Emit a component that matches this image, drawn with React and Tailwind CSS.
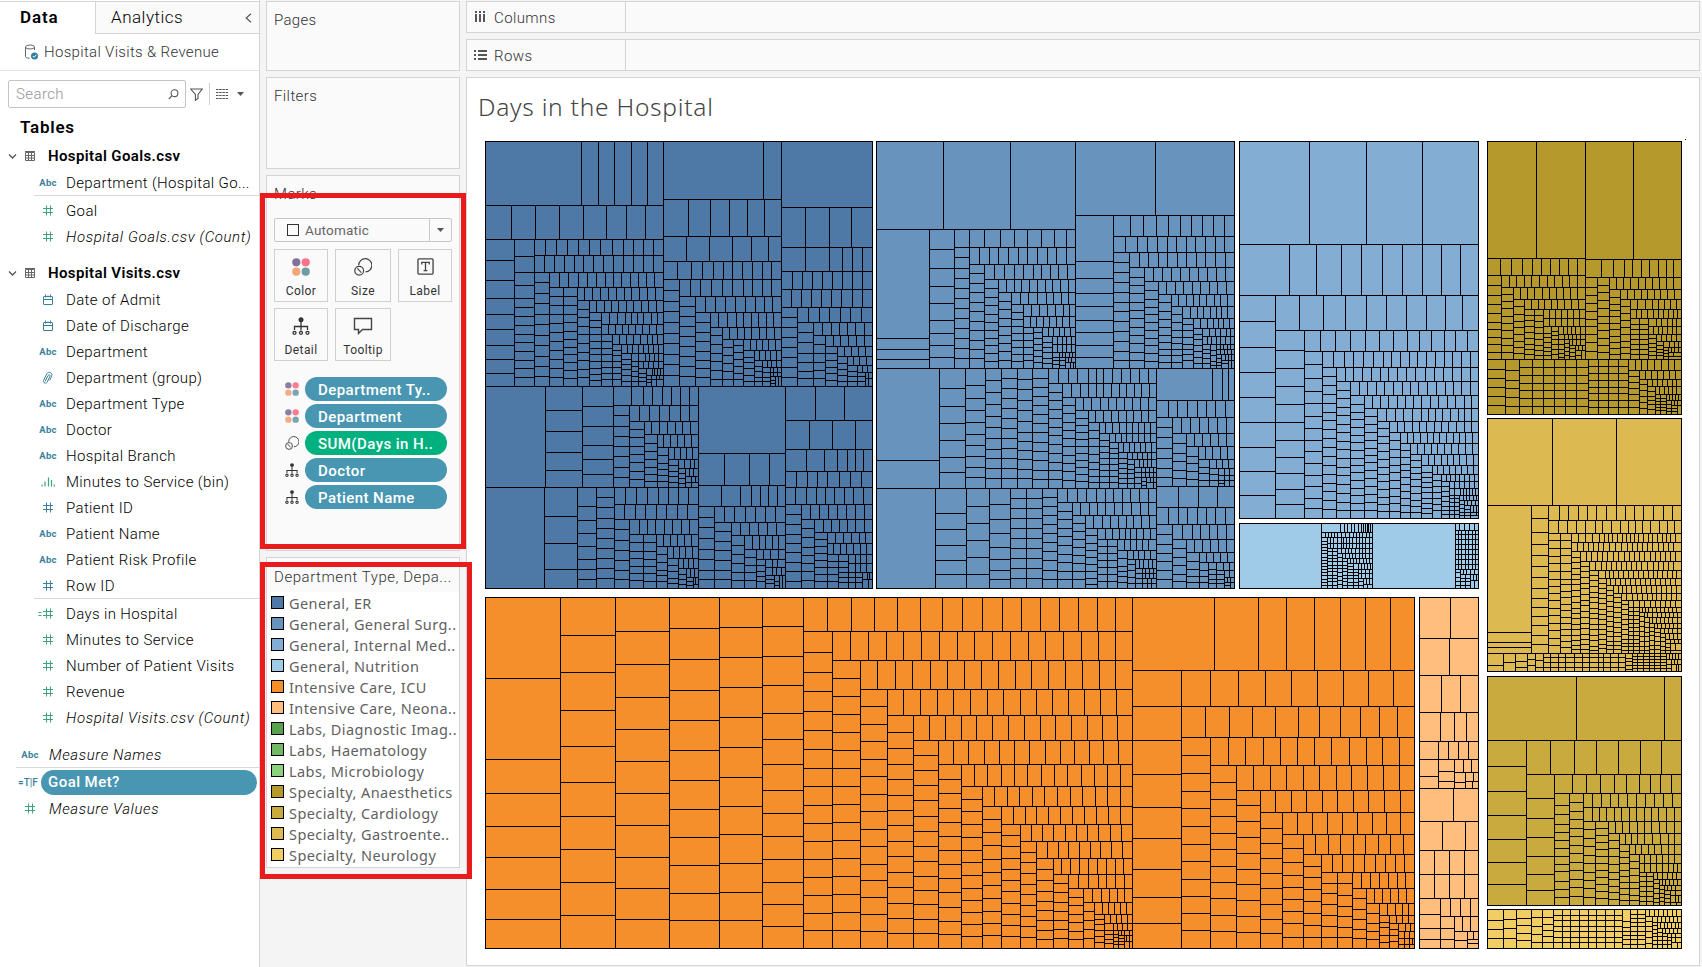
import React from "react";

const C = {
  er: "#4e79a7",
  surgery: "#6893bd",
  internal: "#83add2",
  nutrition: "#a0cbe8",
  icu: "#f48f2b",
  neonatal: "#ffbe7d",
  anaes: "#b5992d",
  cardio: "#c8aa3f",
  gastro: "#ddba51",
  neuro: "#f1ce63",
};

/*
 * Treemap regions. Coordinates are thirds of a pixel from the region's origin `o`
 * (`k` stretches them horizontally); `b` is [left, top, right, bottom].
 * Each step cuts the free area:
 *   rY: x x x   a row down to Y, divided at each x
 *   cX: y y y   a column out to X, divided at each y
 *   cX/n        a column divided into n equal cells
 *   R: x x x    the rest, divided at each x
 */
const REGIONS = [
  { f: C.er, o: [470, 130], b: [46, 34, 580, 769], s: "r226: 334 385 433 484 532;r328: 124 196 268 340 409 469 526;c133: 391 451 505 553 598 646 688 730;c193: 379 427 466 505 532 559 586 613 637 664 691 715 742;r376: 226 259 292 325 358 391 427 460 490 520 550;r427: 223 253 283 313 340 370 400 430 460 490 520 550;c238: 457 490 520 553 583 616 646 679 709 739;r472: 268 295 325 352 379 406 430 454 481 505 529 553;c280: 499 526 553 580 607 634 661 688 715 742;c322: 499 526 553 577 604 628 652 673 697 721 745;r511: 343 367 391 415 439 463 484 508 532 556;c358: 538 562 589 613 640 667 691 718 742;r547: 379 403 424 445 469 490 514 535 559;c394: 571 592 613 634 655 673 694 715 733 751;r583: 418 442 466 484 502 520 544 562;r613: 415 436 457 475 496 517 538 559;c427: 634 655 673 694 712 730 748;r643: 448 469 490 511 532 547 562;c454: 661 676 694 712 730 748;r670: 472 487 505 520 535 550 565;c484: 688 703 718 736 754;r694: 505 526 537 553 565;c505: 709 724 739 754;r715: 520 535 550 565;c529: 730 742 754;r736: 547 553 562 571;c544: 748 757;r748: 559 568;R: 559" },
  { f: C.er, o: [470, 130], b: [580, 34, 934, 769], s: "r208: 880;r319: 655 721 778 832 883;r394: 649 718 787 844 895;r448: 622 664 697 730 760 787 817 847 877 904;c628: 481 514 544 577 610 640 673 703 736;r499: 661 691 724 757 787 820 847 877 904;c676: 529 559 589 619 649 679 709 739;r547: 706 736 766 796 826 856 883 907;c721: 577 607 634 664 691 715 742;r592: 745 772 799 820 844 865 889 910;c757: 616 643 670 694 721 748;r628: 778 802 823 844 868 889 913;c790: 652 676 700 724 748;c820: 646 667 688 709 730 748;r661: 841 859 877 895 916;c853: 682 697 715 736 754;r691: 868 886 901 919;c877: 709 724 742 754;r712: 892 904 919;c901: 727 742 754;r727: 910 922;r739: 910 922;c916: 751 760;R: 925" },
  { f: C.er, o: [470, 130], b: [934, 34, 1207, 769], s: "r232:;r352: 1006 1078 1144;r424: 1006 1078 1117 1147 1177;r478: 967 997 1027 1057 1087 1117 1147 1177;r532: 964 994 1024 1054 1084 1114 1147 1177;c982: 562 592 622 652 682 712 742;r577: 1015 1048 1078 1111 1141 1174;c1030: 607 637 670 697 724 745;r616: 1057 1084 1108 1132 1156 1183;c1066: 643 670 697 721 745;r649: 1090 1111 1135 1159 1183;c1102: 670 691 712 730 751;r679: 1123 1144 1165 1186;c1132: 700 718 736 754;r706: 1150 1168 1189;c1162: 724 739 754;r727: 1177 1192;c1186: 739 754;r745: 1195;R: 1195" },
  { f: C.er, o: [470, 380], b: [46, 19, 685, 322], s: "c226:;c337: 91 154 217 271;c430: 79 139 196 238 283;r76: 484 520 547 577 604 631 658;c478: 106 139 169 199 229 262 292;r124: 508 538 568 598 631 658;c523: 148 172 199 223 247 274 298;r163: 544 568 592 616 637 661;c562: 190 214 238 262 283 304;r202: 580 601 622 643 664;c595: 226 250 268 286 304;r238: 613 631 649 667;c625: 256 274 289 307;r265: 643 661 673;c646: 280 295 310;r289: 658 670;r307: 664 676;R: 664" },
  { f: C.er, o: [470, 380], b: [46, 322, 685, 625], s: "c223:;c322: 409 490 568;c379: 379 421 460 499 538 568 598;c433: 352 382 415 445 475 505 535 565 595;r373: 466 499 532 565 595 625 655;r418: 463 496 526 559 589 622 652;c478: 448 481 511 541 571 598;r463: 508 532 556 583 607 634 658;c520: 487 514 535 559 580 601;c559: 487 514 538 559 580 604;r499: 580 601 622 643 664;c592: 523 547 571 586 604;r535: 610 628 646 667;c625: 556 574 595 610;r565: 640 655 670;c649: 583 598 613;r592: 661 673;c670: 604 616;r613: 676" },
  { f: C.er, o: [470, 380], b: [685, 19, 946, 625], s: "r220:;r316: 763 838 898;r379: 754 811 844 871 895 922;c733: 412 442 475 508 538 571 598;r427: 763 793 826 856 886 916;c784: 454 484 511 541 571 598;r466: 811 838 865 892 919;c823: 496 523 550 577 601;r508: 847 868 886 907 925;c859: 532 556 577 601;r538: 880 901 925;c886: 556 574 589 604;r562: 907 922;r586: 907 919 934;c913: 598 610;c928: 604 616;R: 937" },
  { f: C.er, o: [470, 380], b: [946, 19, 1207, 625], s: "r121: 1036 1123;r208: 1018 1087 1156;r274: 1009 1063 1102 1132 1156 1180;r322: 979 1012 1042 1072 1108 1141 1174;r373: 976 1009 1039 1066 1093 1123 1150 1180;c994: 403 433 463 490 517 547 574 604;r418: 1021 1048 1075 1102 1129 1156 1183;c1033: 445 472 502 526 550 574 601;r457: 1060 1084 1108 1132 1156 1183;c1072: 478 499 520 541 562 583 604;r490: 1096 1120 1144 1168 1186;r523: 1090 1111 1129 1150 1171 1189;c1105: 544 562 583 604;c1135: 544 562 577 592 607;r550: 1156 1171 1189;r577: 1156 1171 1189;c1156: 592 607;c1177: 592 607;r598: 1192 1198;R: 1195" },

  { f: C.surgery, o: [870, 130], b: [19, 34, 616, 715], s: "r298: 220 421;c178: 625 658 688;c253: 358 415 469 520 571 610 646 682;c298: 382 415 445 475 505 535 565 595 625 655 685;r352: 343 391 433 472 514 553 589;r403: 328 358 385 415 445 472 502 532 559 589;c343: 430 460 487 517 544 574 601 631 658 685;r448: 373 403 433 460 490 514 541 565 592;c385: 475 502 526 553 577 601 625 646 670 694;r487: 409 433 454 478 502 526 547 571 595;c424: 514 538 565 589 616 640 664 691;r523: 451 475 502 529 550 574 595;c460: 547 568 589 610 631 652 673 694;r559: 484 508 532 556 580 598;r592: 481 499 520 538 559 577 598;c490: 610 631 652 673 691;c517: 607 625 643 661 679 697;r619: 535 550 568 583 601;c547: 637 652 667 685 700;r643: 562 577 589 604;r667: 562 577 589 604;c568: 682 691 703;r682: 577 586 598 607;c586: 691 706;r697: 595 604;R: 601 610" },
  { f: C.surgery, o: [870, 130], b: [253, 298, 298, 352], s: "" },
  { f: C.surgery, o: [870, 130], b: [616, 34, 1093, 715], s: "r256: 856;c730: 394 445 490 529 571 607 646 682;r319: 781 820 859 895 931 964 997 1030 1063;r367: 766 802 832 862 892 919 949 976 1006 1036 1063;c778: 397 427 457 487 517 544 574 604 634 664 691;r412: 808 835 865 892 922 949 979 1006 1036 1066;c823: 442 466 490 517 541 565 592 616 640 667 691;r454: 850 877 904 931 958 985 1012 1039 1066;c865: 481 508 532 553 577 601 625 646 670 694;r493: 889 916 940 967 991 1018 1042 1069;c904: 517 544 568 592 616 637 658 676 697;r529: 925 949 970 988 1009 1033 1051 1072;c937: 553 577 601 622 640 658 676 697;r565: 961 982 1000 1021 1039 1054 1072;c970: 583 601 622 643 658 673 691;r595: 991 1012 1030 1045 1060 1078;c997: 613 628 646 664 682 700;r619: 1018 1036 1051 1069 1081;r643: 1012 1024 1039 1051 1066 1081;c1021: 658 670 685 700;c1039: 661 676 694 706;r658: 1051 1060 1072 1081;r673: 1051 1063 1072 1084;c1054: 685 697 706;r691: 1066 1075 1084;c1075: 700;R: 1084" },
  { f: C.surgery, o: [870, 360], b: [19, 25, 859, 385], s: "c208: 301;c286: 85 139 190 241 292 337;c346: 76 115 151 187 223 256 289 322 352;c394: 61 97 133 169 202 235 268 295 325 355;c442: 55 85 115 145 175 205 235 265 295 325 355;c487: 58 88 121 151 184 217 244 271 298 328 355;c535: 55 82 109 136 163 190 217 247 274 301 331 358;r70: 565 595 622 655 679 700 727 754 781 808 835;c577: 97 121 148 175 202 226 253 280 307 331 358;r112: 604 631 655 679 700 724 748 769 793 814 838;c616: 136 160 187 211 235 259 286 310 334 361;r151: 640 664 691 715 739 763 787 811 835;c655: 175 196 217 238 259 280 301 322 343 364;r187: 676 700 724 745 769 790 814 835;c688: 211 235 259 283 307 328 349 367;r220: 706 727 748 769 787 805 823 841;c718: 241 259 277 295 313 331 349 367;r247: 736 754 769 787 805 823 841;c745: 265 280 295 313 331 349 367;r277: 760 778 793 811 826 844;c772: 295 310 325 340 355 370;r298: 787 802 817 832 844;c793: 313 328 340 355 370;r322: 808 820 832 844;c814: 337 352 370;r337: 826 838 850;r352: 826 838 850;c829: 364 376;r367: 841 850;R: 850" },
  { f: C.surgery, o: [870, 360], b: [19, 385, 859, 685], s: "c196:;c289: 460 508 556 601 643;c358: 439 490 541 592 643;c421: 433 478 520 562 598 631 658;c469: 415 445 475 505 535 565 595 625 655;c517: 415 445 475 505 535 565 595 625 655;c562: 412 439 466 493 520 547 574 601 631 658;r427: 592 622 649 679 706 730 757 781 808 835;c607: 454 478 505 529 556 583 607 634 658;r466: 631 658 682 706 733 757 784 811 835;c646: 490 514 538 562 586 610 634 658;r505: 670 697 721 745 769 790 814 838;c682: 526 550 571 592 613 634 655 673;r538: 706 727 748 766 781 799 820 841;c712: 559 580 601 622 643 664;c742: 559 580 601 622 643 664;r571: 763 781 799 817 835;c772: 595 619 634 649 667;r598: 790 805 823 841;c796: 613 631 652 670;r625: 808 820 835 847;c817: 640 655 670;r640: 826 838 850;r655: 826 838 850;r670: 832 844;R: 832 844" },
  { f: C.surgery, o: [870, 360], b: [859, 25, 1093, 379], s: "r121: 1027 1057 1075;r172: 895 922 952 982 1009 1036 1066;c907: 202 232 265 295 325 352;r220: 934 961 988 1015 1042 1069;c949: 250 280 304 331 355;r259: 973 997 1021 1045 1069;c985: 289 310 334 358;r298: 1006 1027 1051 1072;c1018: 322 340 361;r325: 1039 1057 1075;c1045: 343 361;r346: 1063 1078;c1063: 361 370;r361: 1078;R: 1078" },
  { f: C.surgery, o: [870, 360], b: [859, 379, 1093, 685], s: "r442: 925 985 1042;r493: 895 925 952 982 1009 1036 1066;c907: 523 553 580 604 631 658;r538: 937 967 991 1018 1042 1069;c949: 565 592 616 643 664;r577: 973 997 1021 1045 1069;c988: 604 628 649 667;r607: 1009 1030 1051 1072;c1015: 631 649 667;c1039: 628 643 658 670;r631: 1060 1078;c1063: 643 658 670;r652: 1078;r667: 1072 1081;c1081: 676" },

  { f: C.internal, o: [1230, 130], b: [28, 34, 745, 1165], s: "r343: 238 409 577;r496: 178 259 334 394 457 517 577 634 691;c136: 574 652 727 802 877 952 1024 1096;r601: 208 280 346 409 469 529 589 646 697;c223: 661 715 769 823 877 931 982 1030 1078 1123;r664: 271 316 361 406 448 490 532 568 604 643 676 712;c277: 703 745 784 820 859 895 931 964 1000 1036 1069 1105 1135;r712: 310 343 370 400 430 460 484 511 538 562 589 616 643 667 694 721;c319: 739 766 793 820 847 871 898 925 952 979 1006 1033 1060 1084 1111 1138;r754: 346 370 397 424 451 475 502 529 556 586 613 640 667 694 721;c361: 781 805 832 856 883 907 934 958 985 1012 1036 1063 1090 1117 1141;r796: 388 412 439 463 490 517 541 565 592 619 646 670 694 721;c403: 823 847 868 892 916 937 961 985 1006 1027 1051 1075 1096 1120 1141;r835: 427 451 475 502 526 550 574 601 625 652 676 703 724;c442: 859 883 907 931 955 976 997 1021 1045 1069 1093 1117 1141;r874: 469 496 520 547 574 595 616 637 661 685 703 724;c478: 895 919 940 964 988 1012 1033 1054 1078 1102 1123 1144;r907: 502 523 547 568 589 613 634 655 679 703 724;c511: 931 958 982 1006 1027 1051 1075 1099 1120 1144;r940: 532 550 571 592 610 628 649 670 688 706 727;c541: 961 982 1003 1021 1042 1063 1084 1105 1126 1147;r973: 562 583 604 622 643 664 685 706 727;c574: 991 1012 1030 1048 1069 1090 1111 1129 1147;r1006: 595 613 634 652 670 688 709 730;c607: 1027 1042 1057 1072 1087 1105 1120 1135 1150;r1033: 622 640 658 676 694 712 730;c634: 1051 1069 1087 1105 1123 1141;r1054: 649 661 676 688 703 718 733;c658: 1069 1084 1099 1114 1129 1141 1153;r1075: 673 688 703 718 733;r1096: 673 691 700 709 718 727 736;c673: 1105 1117 1129 1141 1153;c688: 1105 1117 1129 1141 1153;r1111: 700 709 718 730 739;c703: 1123 1135 1147 1156;r1126: 712 724 736;c721: 1138 1147 1156;r1147: 730 739;r1156: 739" },
  { f: C.nutrition, o: [1230, 130], b: [28, 1180, 274, 1375], s: "" },
  { f: C.nutrition, o: [1230, 130], b: [274, 1180, 427, 1375], s: "r1207: 331 343 352 364 373 385 394 400 406 412 415 421;r1222: 286 295 304 313 322 334 346 358 370 379 388 397 409 418;c292: 1234 1243 1252 1261 1270 1282 1291 1300 1309 1318 1327 1336 1348 1357 1366;r1240: 301 310 322 334 340 349 358 367 379 388 397 406 418;r1255: 301 310 322 334 340 349 358 367 379 388 397 406 418;c307/12;c322/12;r1270: 334 346 355 364 376 388 397 406 418;c337/9;r1285: 346 358 367 376 388 397 406 418;c352/9;r1300: 361 370 379 388 400 409 418;c370/8;r1318: 385 394 403 412 421;c385/6;r1330: 394 406 418;r1345: 394 406 418;c400: 1354 1366;r1363: 409 418;R: 412" },
  { f: C.nutrition, o: [1230, 130], b: [427, 1180, 676, 1375], s: "" },
  { f: C.nutrition, o: [1230, 130], b: [676, 1180, 745, 1375], s: "r1201: 688 703 718 733;r1213: 685 694 706 715 727 736;r1228: 685 694 706 715 727 736;r1243: 685 694 706 715 727 736;r1258: 685 694 706 715 727 736;r1273: 685 694 706 715 727 736;r1288: 685 694 706 715 727 736;r1303: 685 694 706 715 727 736;r1318: 685 694 706 715 727 736;c691: 1327 1342 1354 1366;r1333: 700 709 721 733;c706: 1345 1354 1366;c721: 1345 1354 1366;r1351: 730 739;R: 733" },

  { f: C.anaes, o: [1470, 130], b: [52, 34, 346, 688], s: "r385: 199;r436: 91 124 157 187 214 241 268 295 322;c94: 466 496 523 550 577 598 622 643 667;r472: 118 139 163 184 208 232 253 277 298 322;c130: 493 514 535 559 580 601 625 646 667;r508: 151 172 193 217 238 259 280 301 322;c163: 529 553 574 592 613 634 652 670;r538: 184 205 223 244 262 283 304 325;c193: 556 571 589 607 625 643 658 673;c220: 556 574 592 610 628 646 661 676;r565: 238 256 274 292 310 328;r589: 238 256 274 292 310 328;c244: 610 622 637 652 664 676;c265: 604 616 628 643 658 673;r613: 280 292 304 316 331;c283: 628 643 658 670 682;r628: 295 307 319 331;c298: 640 652 664 676;r646: 307 319 331;c316: 655 667 679;r661: 325 337;c334: 676;R:" },
  { f: C.anaes, o: [1470, 130], b: [346, 34, 634, 688], s: "r388: 490;r442: 394 430 463 487 514 538 565 589 610;c382: 472 496 520 544 568 589 613 637 664;c418: 466 487 511 535 559 580 601 625 646 667;r478: 439 460 481 505 526 547 568 589 610;c451: 502 523 541 559 580 598 619 637 655 673;r508: 472 493 514 532 553 571 592 613;c481: 529 550 571 592 613 634 652 670;r538: 502 526 547 565 583 601 619;r565: 499 514 532 550 565 580 595 610 622;c508: 583 598 613 628 643 658 673;c535: 583 598 613 628 643 658 673;r589: 559 574 592 607 619;r613: 550 565 577 592 607 619;c559: 625 640 652 664 676;r634: 574 589 604 619;c580: 646 658 667 676;r652: 598 613 625;c595: 661 670 679;r667: 604 613 625;r679: 610" },
  { f: C.anaes, o: [1470, 130], b: [52, 688, 634, 853], s: "c106: 718 745 772 799 826;c148: 721 751 775 802 829;c187: 712 736 760 781 805 829;c220: 712 736 760 781 805 829;c253: 712 736 760 781 805 829;c286: 712 736 760 781 805 829;c319: 712 736 760 781 805 829;c355: 712 736 760 781 805 829;c385: 709 730 751 772 790 811 832;c415: 709 730 751 772 790 811 832;c445: 709 730 751 772 790 811 832;c475: 709 730 751 772 790 811 832;r721: 496 514 532 553 574 595 613;c508: 739 757 775 793 811 832;r748: 526 544 562 580 598 616;c532: 763 781 799 817 835;r769: 547 562 577 592 607 619;c556: 784 799 811 823 838;r793: 568 583 595 607 619;c571: 805 814 823 832 841;c589: 805 814 823 832 841;r811: 598 607 616 625;c604: 823 835 844;r826: 613 622;c622: 835 844" },

  { f: C.gastro, o: [1470, 540], b: [52, -365, 634, 340], s: "r-104: 247 439;c184: 277 307 322;c235: -65 -23 13 46 79 112 145 175 202 229 256 286 313;r-60: 268 295 325 352 379 409 439 466 493 520 550 580 607;r-20: 265 292 319 346 376 397 424 451 475 496 517 541 568 592 613;c271: 1 25 49 70 94 118 139 160 181 205 226 250 271 295 316;c304: 1 25 46 70 94 118 133 154 172 193 211 232 250 268 286 304 322;r7: 325 346 367 388 403 415 427 442 457 469 481 493 505 520 535 547 562 577 589 601 616;r34: 322 340 355 370 385 400 418 436 454 472 487 502 517 532 547 565 580 595 610;c331: 52 67 85 103 118 133 151 169 187 205 220 235 253 268 286 301 316 328;r64: 349 364 382 397 412 430 445 463 478 493 508 523 541 556 571 586 601 616;c358: 79 94 112 130 145 163 181 196 214 232 250 265 283 298 313 328;r91: 376 394 409 424 439 454 469 484 499 514 532 550 565 580 595 610;c385: 106 121 139 157 172 187 205 220 235 253 268 286 301 319 331;r115: 406 418 430 445 460 475 490 505 520 535 550 562 577 592 607 619;c409: 130 145 160 175 190 208 223 238 253 268 283 298 313 325;r136: 421 436 451 466 481 496 511 526 541 556 571 586 601 616;c430: 151 166 184 199 214 229 244 259 274 289 304 316 328;r160: 445 457 469 484 499 514 529 544 559 574 589 604 619;c454: 172 187 202 217 232 247 262 277 289 304 316 328;r181: 469 487 502 517 532 547 559 574 589 604 619;c475: 193 208 223 238 253 268 283 298 310 319 331;r202: 490 508 523 541 556 571 586 601 616;c490: 214 226 238 250 262 274 286 298 310 319 331;c508: 214 226 238 250 262 274 286 298 310 319 331;r217: 517 526 535 547 559 571 583 595 607 619;c523: 229 244 259 274 289 304 319 331;r232: 532 547 562 574 586 598 610 622;c538: 247 262 277 289 304 319 331;r250: 547 559 571 583 595 607 622;c553: 262 274 286 301 316 328;r265: 562 574 586 598 610 622;c571: 277 289 304 316 328;r280: 583 595 607 622;c586: 292 304 319 331;r298: 598 610 622;c601: 310 322 331;r310: 613 625;r331: 616" },
  { f: C.gastro, o: [1470, 540], b: [52, 340, 634, 394], s: "c100: 376;c136: 367;c172: 364 382;c196: 358 376;c220: 361 382;c241: 352 367 382;c265: 352 367 382;c286: 352 367 382;c313: 352 367 382;c337: 352 367 382;c358: 352 367 382;c385: 352 367 382;c400: 352 367 382;c421: 352 367 382;c445: 352 367 382;c466: 352 367 382;c487: 355 364 376 388;c502: 349 358 367 376 385;c520: 349 358 367 376 385;c538: 349 358 367 376 385;c553: 349 358 367 376 385;c571: 349 358 367 376 385;c589: 349 358 367 376 385;r358: 598 607 616 625;c604: 373 385;r373: 613 622;R: 619 625" },
  { f: C.cardio, o: [1470, 540], b: [52, 409, 634, 1096], s: "r601: 319 583;c169: 679 754 826 898 967 1033;r703: 241 313 379 445 511 574;c253: 775 835 892 949 1003 1051;r760: 307 349 391 433 469 508 541 571 604;c298: 796 823 853 877 901 925 949 973 994 1024 1048 1072;c340: 787 814 838 865 889 916 940 967 991 1018 1042 1069;r802: 367 394 421 445 472 499 526 553 580 607;r844: 367 388 409 433 454 478 499 523 544 565 589 613;c376: 868 895 919 946 970 997 1021 1045 1072;c415: 865 886 907 928 949 970 991 1012 1033 1054 1075;r880: 436 457 478 502 523 544 568 589 613;c448: 901 925 949 973 997 1018 1039 1057 1078;r913: 466 484 502 523 547 571 595 613;c478: 934 952 970 991 1009 1027 1045 1063 1081;r943: 496 514 535 553 574 595 613;c508: 964 985 1006 1027 1045 1066 1081;r970: 523 541 559 577 595 613;r997: 523 541 559 577 595 610 622;c529: 1009 1024 1039 1054 1069 1084;c550: 1009 1024 1039 1054 1069 1084;r1018: 562 577 592 607 619;c568: 1030 1045 1060 1075 1087;r1036: 577 586 598 610 622;c583: 1048 1060 1072 1084;r1051: 592 604 616;c601: 1063 1075 1087;r1066: 616;r1087: 616 625;R: 619" },
  { f: C.neuro, o: [1470, 540], b: [52, 1108, 634, 1225], s: "c100: 1141 1168 1195;c139: 1138 1165 1195;c184: 1135 1156 1180 1201;c217: 1132 1159 1183 1207;c250: 1132 1153 1171 1189 1207;c277: 1126 1141 1159 1174 1192 1207;c301: 1126 1141 1159 1174 1192 1207;c328: 1126 1141 1159 1174 1192 1207;c355: 1126 1141 1159 1174 1192 1207;c379: 1126 1141 1159 1174 1192 1207;c406: 1126 1141 1159 1174 1192 1207;c433: 1126 1141 1159 1174 1192 1207;c457: 1126 1141 1159 1174 1192 1207;c481: 1144 1162 1174 1186 1198 1213;c502: 1123 1135 1147 1159 1174 1186 1198 1213;c526: 1123 1135 1147 1159 1174 1186 1198 1213;r1129: 538 553 565 580 592 607 619;c547: 1144 1159 1174 1192 1210;r1147: 562 574 586 598 610 622;c562: 1156 1168 1180 1189 1201 1213;r1165: 571 583 592 604 616 625;c577: 1177 1189 1201 1213;r1180: 586 598 610 622;c592: 1189 1201 1213;r1192: 604 616;c604: 1201 1213;r1207: 616;R: 622" },

  { f: C.icu, o: [470, 590], b: [46, 22, 1987, 1075], s: "c271: 265 508 610 709 802 898 988;c436: 136 247 361 469 577 679 778 877 976;c598: 124 223 322 418 514 610 706 802 895 988;c748: 115 208 301 391 481 571 658 742 826 910 991;c877: 112 202 292 382 472 562 649 733 820 907 991;c1000: 109 199 286 370 448 523 601 670 739 808 877 943 1009;r124: 1072 1144 1213 1282 1351 1417 1477 1537 1597 1654 1711 1768 1825 1881 1936;c1087: 187 247 304 364 421 478 535 589 646 700 754 808 862 916 970 1021;r211: 1141 1195 1249 1300 1354 1408 1462 1513 1567 1621 1676 1726 1780 1834 1885 1936;c1171: 265 319 373 427 481 535 589 643 697 751 805 859 913 967 1021;r298: 1222 1276 1327 1381 1432 1483 1534 1585 1636 1684 1735 1786 1837 1888 1936;c1252: 349 403 454 508 559 613 664 718 769 823 871 922 973 1024;r376: 1300 1351 1402 1450 1501 1552 1600 1651 1699 1747 1795 1843 1891 1939;c1330: 427 475 523 568 616 661 706 754 799 847 892 940 985 1030;r451: 1378 1426 1474 1519 1567 1615 1663 1711 1756 1804 1852 1897 1942;c1405: 496 541 586 631 679 724 769 814 859 901 943 988 1030;r523: 1450 1495 1543 1588 1633 1678 1726 1771 1813 1858 1900 1945" },
  { f: C.icu, o: [940, 590], k: 1.0523, b: [-5, 523, 548, 1075], s: "c61: 568 610 655 697 739 781 823 865 907 952 994 1033;r589: 98 135 175 212 249 289 326 363 403 440 477 514;c121: 628 664 703 742 781 817 856 895 931 967 1003 1039;r649: 155 192 226 263 297 335 372 406 443 477 514;c175: 688 727 766 808 847 886 925 964 1000 1036;r703: 209 243 275 309 343 377 412 446 480 514;c229: 736 769 805 838 871 904 940 973 1006 1039;r754: 260 292 323 357 389 420 451 486 517;c275: 787 817 850 883 913 946 979 1009 1042;r805: 306 337 366 397 429 457 489 520;c323: 838 871 904 934 961 991 1021 1048;r853: 346 372 397 423 449 474 500 523;c366: 880 907 937 964 991 1018 1045;r895: 394 423 451 474 500 526;c409: 922 946 973 997 1024 1048;r937: 434 460 483 506 526;c440: 964 991 1018 1045;r973: 463 480 497 514 531;c469: 988 1003 1021 1039 1057;r1000: 486 503 517 534;c494: 1021 1033 1048 1060;r1021: 506 520 534;c508: 1033 1042 1054 1063;r1036: 517 526 540;c526: 1045 1054 1063;r1054: 531 540;R: 540" },
  { f: C.icu, o: [940, 590], k: 1.0523, b: [548, 22, 1353, 1075], s: "r241: 782 908 987 1067 1141 1213 1285;c688: 349 451 553 652 745 838 922 1000;r349: 771 851 928 1002 1076 1150 1221 1292;r442: 756 825 890 956 1022 1081 1141 1198 1253 1304;c771: 496 550 604 655 709 763 814 868 919 970 1021;r526: 822 871 922 970 1019 1067 1116 1167 1216 1261 1310;c845: 577 628 679 730 778 829 877 925 976 1024;r601: 893 942 987 1036 1081 1130 1173 1218 1264 1310;c913: 646 694 742 790 838 883 931 979 1027;r667: 956 1002 1044 1090 1133 1178 1221 1267 1312;c976: 715 760 805 850 895 943 988 1030;r733: 1019 1062 1104 1147 1190 1233 1273 1312;c1036: 775 817 856 892 928 964 1000 1042;r793: 1070 1107 1141 1178 1213 1250 1284 1321;c1087: 829 862 898 934 970 1006 1042;r847: 1118 1147 1178 1210 1241 1270 1298 1324;c1133: 880 910 943 976 1009 1042;c1175: 880 916 949 979 1012 1042;r895: 1201 1227 1253 1278 1304 1327;c1215: 925 958 988 1018 1045;r940: 1238 1261 1284 1307 1330;c1253: 970 1000 1024 1048;r976: 1275 1298 1318 1335;c1281: 997 1012 1036 1057;r1000: 1301 1318 1335;c1307: 1018 1036 1054;r1024: 1327 1341;r1045: 1324 1338;r1063: 1324 1338 1347;R: 1324 1338" },
  { f: C.neonatal, o: [940, 590], k: 1.0523, b: [1367, 22, 1536, 595], s: "r145: 1455;r256: 1452;r367: 1429 1483;r454: 1426 1466 1501;r508: 1421 1449 1478 1506;c1421: 559;c1466: 544 574;r547: 1492 1515;c1498: 577;r574: 1521;R: 1518" },
  { f: C.neonatal, o: [940, 590], k: 1.0523, b: [1367, 595, 1536, 1075], s: "r694: 1464;r781: 1432 1498;r853: 1409 1452 1495;r925: 1409 1452 1495;c1426: 973 1015 1048;r979: 1455 1483 1512;c1466: 1015 1048;r1024: 1489 1512;c1503: 1051;r1048: 1521;r1060:" },
];

function layout({ o, b, s, k = 1 }) {
  const px = (v) => o[0] + Math.floor((v * k) / 3);
  const py = (v) => o[1] + Math.floor(v / 3);
  const [l, t, r, btm] = b;
  let x = l;
  let y = t;
  const d = [];
  const hl = (yy, a, z) => d.push(`M${px(a)} ${py(yy) + 0.5}H${px(z) + 1}`);
  const vl = (xx, a, z) => d.push(`M${px(xx) + 0.5} ${py(a)}V${py(z) + 1}`);
  for (const raw of s.split(";")) {
    const step = raw.trim();
    if (!step) continue;
    const m = step.match(/^([rcR])(-?\d+)?(?:\/(\d+))?:?\s*(.*)$/);
    const kind = m[1];
    const cuts = m[4] ? m[4].split(/\s+/).map(Number) : [];
    if (kind === "c") {
      const end = Number(m[2]);
      if (m[3]) {
        const n = Number(m[3]);
        for (let i = 1; i < n; i++) cuts.push(y + ((btm - y) * i) / n);
      }
      cuts.filter((v) => v > y).forEach((v) => hl(v, x, end));
      vl(end, y, btm);
      x = end;
    } else {
      const end = kind === "R" ? btm : Number(m[2]);
      cuts.filter((v) => v > x).forEach((v) => vl(v, y, end));
      if (kind === "r") hl(end, x, r);
      y = end;
    }
  }
  const X = px(l);
  const Y = py(t);
  return { X, Y, W: px(r) - X, H: py(btm) - Y, d: d.join("") };
}

function Treemap() {
  return (
    <svg className="block" width="1200" height="812" viewBox="485 141 1200 812" shapeRendering="crispEdges" overflow="visible">
      {REGIONS.map((g, i) => {
        const q = layout(g);
        return (
          <g key={i} stroke="#000" strokeWidth="1">
            <rect x={q.X + 0.5} y={q.Y + 0.5} width={q.W} height={q.H} fill={g.f} />
            <path d={q.d} fill="none" />
          </g>
        );
      })}
      <rect x="1685" y="139" width="1" height="1" />
    </svg>
  );
}

const BLUE = "#3b7f9c";
const GREEN = "#3fa37c";

function Hash({ color = GREEN, calc }) {
  return (
    <svg width="16" height="12" viewBox="0 0 16 12" stroke={color} fill="none" className="overflow-visible">
      {calc && <path d="M-1.500 4.500h3M-1.500 7.500h3" />}
      <path d="M3 3.500h10M3 7.500h10" />
      <path d="M6.500 .5v10M10.500 .5v10" />
    </svg>
  );
}

function FieldIcon({ type }) {
  if (type === "abc") return <span className="text-[9.5px] font-bold tracking-[0.2px] text-[#3b7f9c]">Abc</span>;
  if (type === "tf") return <span className="whitespace-nowrap text-[10px] font-medium text-[#3b7f9c]">=T|F</span>;
  if (type === "#") return <Hash />;
  if (type === "#b") return <Hash color={BLUE} />;
  if (type === "=#") return <Hash calc />;
  if (type === "date")
    return (
      <svg width="12" height="12" viewBox="0 0 12 12" fill="none" stroke={BLUE}>
        <rect x="1.500" y="2.500" width="9" height="8" rx=".5" />
        <path d="M1.500 5.500h9M3.500 .5v3M8.500 .5v3M6 1.500v1" />
      </svg>
    );
  if (type === "group")
    return (
      <svg width="12" height="14" viewBox="0 0 12 14" fill="none" stroke={BLUE} strokeLinecap="round">
        <path d="M3.200 10 6.200 4.400c.7-1.300 2.400-.5 1.700.9L5.300 10.900c-1.100 2.300-4.700 1.100-3.700-1.500L4.900 2.700c1.400-2.600 5.700-1.200 4.900 1.900-.3 1.200-1.200 2.800-2 4.500" />
      </svg>
    );
  return (
    <svg width="14" height="12" viewBox="0 0 14 12" stroke={GREEN}>
      <path d="M1 8.500v2M4 5.500v5M7.500 1.500v9M10.500 4v6.500M13.300 8.500v2" strokeWidth="1.200" />
    </svg>
  );
}

function Field({ type, name, italic, outer }) {
  return (
    <div className={"flex h-[26px] items-center " + (outer ? "pl-[14px]" : "pl-[32px]")}>
      <span className="flex w-8 shrink-0 items-center justify-center">
        <FieldIcon type={type} />
      </span>
      <span className={"whitespace-nowrap text-[15px] font-[350] text-black " + (outer ? "pl-[3px] " : "pl-[2px] ") + (italic ? "italic tracking-[0.6px]" : "tracking-[0.36px]")}>{name}</span>
    </div>
  );
}

function TableHead({ name }) {
  return (
    <div className="mb-px flex h-[26px] items-center pl-[8px]">
      <svg width="9" height="7" viewBox="0 0 9 7" fill="none" stroke="#555" strokeWidth="1.300">
        <path d="M1 1.500 4.500 5 8 1.500" />
      </svg>
      <svg className="ml-[8px]" width="10" height="10" viewBox="0 0 10 10" fill="none" stroke="#666">
        <path d="M.5 1.500h9v8h-9zM0 .5h10M.5 4.500h9M.5 7h9M3.500 2v7.500M6.500 2v7.500" />
      </svg>
      <span className="ml-[13px] whitespace-nowrap text-[15px] font-semibold tracking-[0.38px] text-black">{name}</span>
    </div>
  );
}

function DataPane() {
  return (
    <aside className="flex h-full w-[260px] shrink-0 flex-col overflow-hidden border-r border-[#d4d4d4] bg-white pt-px">
      <div className="flex h-[33px] border-t border-[#d4d4d4]">
        <div className="flex w-[95px] items-center pl-[20px] text-[17px] font-semibold tracking-[0.9px] text-black">Data</div>
        <div className="flex flex-1 items-center justify-between border-b border-l border-[#d4d4d4] bg-[#fafafa] pl-[15px] pr-[7px] text-[17px] font-[350] tracking-[0.5px] text-black">
          Analytics
          <svg width="7" height="10" viewBox="0 0 7 10" fill="none" stroke="#555" strokeWidth="1.200">
            <path d="M6 .8 1.200 5 6 9.200" />
          </svg>
        </div>
      </div>
      <div className="flex h-[37px] items-center border-b border-[#e2e2e2] pl-[24px]">
        <svg width="15" height="16" viewBox="0 0 15 16" fill="none" stroke="#666">
          <path d="M10.500 6V3M1.500 3v9.500c0 .8 1.500 1.600 4 1.700" />
          <ellipse cx="6" cy="3" rx="4.500" ry="2" />
          <circle cx="10.500" cy="12" r="3.500" fill="#3580a0" stroke="none" />
          <path d="m8.800 12 1.300 1.300 2.200-2.500" stroke="#fff" />
        </svg>
        <span className="ml-[5px] whitespace-nowrap pt-px text-[15px] font-[350] tracking-[0.32px] text-[#333]">Hospital Visits &amp; Revenue</span>
      </div>
      <div className="mt-[9px] flex h-[28px] items-center pl-[8px]">
        <div className="flex h-full w-[178px] items-center justify-between rounded-[2px] border border-[#c4c4c4] pl-[7px] pr-[6px] text-[15px] font-[350] tracking-[0.4px] text-[#959595]">
          Search
          <svg width="11" height="11" viewBox="0 0 11 11" fill="none" stroke="#555" strokeWidth="1.100">
            <circle cx="6.500" cy="4.200" r="3.400" />
            <path d="M4.100 6.700.8 10" />
          </svg>
        </div>
        <svg className="ml-[4px]" width="13" height="13" viewBox="0 0 13 13" fill="none" stroke="#555" strokeWidth="1.100">
          <path d="M.7 1h11.600L8 6.500v4l-2.600 1.800V6.500z" />
        </svg>
        <div className="ml-[6px] h-[22px] w-px bg-[#d0d0d0]" />
        <svg className="ml-[6px]" width="13" height="10" viewBox="0 0 13 10" stroke="#555" strokeDasharray="2.500 .7">
          <path d="M0 .5h12.500M0 3.500h12.500M0 6.500h12.500M0 9.500h12.500" />
        </svg>
        <svg className="ml-[8px]" width="7" height="4" viewBox="0 0 7 4">
          <path d="M0 0h7L3.500 4z" fill="#555" />
        </svg>
      </div>
      <div className="mb-[2px] mt-[6px] flex h-[27px] items-center pl-[20px] text-[17px] font-semibold tracking-[0.75px] text-black">Tables</div>
      <TableHead name="Hospital Goals.csv" />
      <Field type="abc" name="Department (Hospital Go..." />
      <div className="-mt-px ml-[34px] h-[3px] shrink-0 border-t border-[#d8d8d8]" />
      <Field type="#" name="Goal" />
      <Field type="#" name="Hospital Goals.csv (Count)" italic />
      <div className="h-[10px] shrink-0" />
      <TableHead name="Hospital Visits.csv" />
      <Field type="date" name="Date of Admit" />
      <Field type="date" name="Date of Discharge" />
      <Field type="abc" name="Department" />
      <Field type="group" name="Department (group)" />
      <Field type="abc" name="Department Type" />
      <Field type="abc" name="Doctor" />
      <Field type="abc" name="Hospital Branch" />
      <Field type="bin" name="Minutes to Service (bin)" />
      <Field type="#b" name="Patient ID" />
      <Field type="abc" name="Patient Name" />
      <Field type="abc" name="Patient Risk Profile" />
      <Field type="#b" name="Row ID" />
      <div className="-mt-px ml-[34px] h-[3px] shrink-0 border-t border-[#d8d8d8]" />
      <Field type="=#" name="Days in Hospital" />
      <Field type="#" name="Minutes to Service" />
      <Field type="#" name="Number of Patient Visits" />
      <Field type="#" name="Revenue" />
      <Field type="#" name="Hospital Visits.csv (Count)" italic />
      <div className="h-[11px] shrink-0" />
      <Field type="abc" name="Measure Names" italic outer />
      <div className="-mt-px ml-[16px] h-[2px] shrink-0 border-t border-[#d8d8d8]" />
      <div className="flex h-[26px] items-center pl-[18px]">
        <span className="flex w-[23px] shrink-0">
          <FieldIcon type="tf" />
        </span>
        <div className="flex h-[25px] w-[216px] items-center rounded-full bg-[#4996b2] pl-[7px] text-[15px] font-medium tracking-[0.45px] text-white">Goal Met?</div>
      </div>
      <div className="h-px shrink-0" />
      <Field type="#" name="Measure Values" italic outer />
    </aside>
  );
}

function ColorDots({ size, soft }) {
  return (
    <svg width={size} height={size} viewBox="0 0 18 18" opacity={soft ? 0.9 : 1}>
      <circle cx="4.300" cy="4.300" r="4.100" fill="#84719b" />
      <circle cx="13.700" cy="4.300" r="4.100" fill="#fb7185" />
      <circle cx="4.300" cy="13.700" r="4.100" fill="#f3a578" />
      <circle cx="13.700" cy="13.700" r="4.100" fill="#6f9ba5" />
    </svg>
  );
}

function SizeIcon({ size }) {
  return (
    <svg width={size} height={size} viewBox="0 0 18 18" fill="none" stroke="#444" strokeWidth="1.200">
      <path d="M4.700 7.300A6.600 6.600 0 1 1 11.500 13.900" />
      <circle cx="5.200" cy="12.800" r="4.400" />
      <path d="m3.300 10.300 4 4.300" />
    </svg>
  );
}

function DetailIcon({ size }) {
  return (
    <svg width={size} height={size} viewBox="0 0 18 18" fill="none" stroke="#333" strokeWidth="1.300">
      <circle cx="9" cy="2.700" r="2.500" fill="#333" stroke="none" />
      <path d="M9 5v8.500M2.500 13V9.500h13V13" />
      <circle cx="2.500" cy="15.800" r="1.500" />
      <circle cx="9" cy="15.800" r="1.500" />
      <circle cx="15.500" cy="15.800" r="1.500" />
    </svg>
  );
}

function MarkButton({ label, width, children }) {
  return (
    <div className={"flex h-[53px] flex-col items-center justify-between border border-[#d0d0d0] bg-[#fafafa] pb-[2px] pt-[8px] " + width}>
      {children}
      <span className="text-[12px] leading-[16px] tracking-[0.4px] text-[#333]">{label}</span>
    </div>
  );
}

const PILLS = [
  ["Department Ty..", "dots", "bg-[#4996b2]"],
  ["Department", "dots", "bg-[#4996b2]"],
  ["SUM(Days in H..", "size", "bg-[#00b180]"],
  ["Doctor", "detail", "bg-[#4996b2]"],
  ["Patient Name", "detail", "bg-[#4996b2]"],
];

const LEGEND = [
  ["General, ER", "bg-[#4e79a7]"],
  ["General, General Surg..", "bg-[#6893bd]"],
  ["General, Internal Med..", "bg-[#83add2]"],
  ["General, Nutrition", "bg-[#a0cbe8]"],
  ["Intensive Care, ICU", "bg-[#f48f2b]"],
  ["Intensive Care, Neona..", "bg-[#ffbe7d]"],
  ["Labs, Diagnostic Imag..", "bg-[#59a14f]"],
  ["Labs, Haematology", "bg-[#72b966]"],
  ["Labs, Microbiology", "bg-[#8cd17d]"],
  ["Specialty, Anaesthetics", "bg-[#b5992d]"],
  ["Specialty, Cardiology", "bg-[#c8aa3f]"],
  ["Specialty, Gastroente..", "bg-[#ddba51]"],
  ["Specialty, Neurology", "bg-[#f1ce63]"],
];

function Cards() {
  return (
    <section className="flex w-[206px] shrink-0 flex-col pl-[6px] pt-px">
      <div className="h-[70px] w-[194px] border border-[#d4d4d4] bg-[#fafafa] pl-[7px] pt-[7px] text-[15px] font-[350] tracking-[0.3px] text-[#333]">Pages</div>
      <div className="mt-[6px] h-[92px] w-[194px] border border-[#d4d4d4] bg-[#fafafa] pl-[7px] pt-[7px] text-[15px] font-[350] tracking-[0.4px] text-[#333]">Filters</div>
      <div className="mt-[6px] h-[376px] w-[194px] border border-[#d4d4d4] bg-[#fafafa] pl-[7px] pt-[7px]">
        <div className="h-[35px] text-[15px] font-[350] tracking-[0.4px] text-[#333]">Marks</div>
        <div className="flex h-[24px] w-[178px] items-center rounded-[2px] border border-[#c8c8c8]">
          <div className="ml-[12px] h-[12px] w-[12px] border border-[#333]" />
          <span className="ml-[6px] flex-1 text-[13.5px] tracking-[0.2px] text-[#666]">Automatic</span>
          <div className="flex h-full w-[22px] items-center justify-center border-l border-[#c8c8c8]">
            <svg width="7" height="4" viewBox="0 0 7 4">
              <path d="M0 0h7L3.500 4z" fill="#555" />
            </svg>
          </div>
        </div>
        <div className="mt-[7px] flex gap-[7px]">
          <MarkButton label="Color" width="w-[54px]">
            <ColorDots size={18} />
          </MarkButton>
          <MarkButton label="Size" width="w-[56px]">
            <SizeIcon size={18} />
          </MarkButton>
          <MarkButton label="Label" width="w-[54px]">
            <svg width="17" height="17" viewBox="0 0 18 18" fill="none" stroke="#444" strokeWidth="1.400">
              <rect x="1" y="1" width="16" height="16" rx="1" />
              <path d="M5 6.800V4.700h8v2.100M9 4.700v8.600M7 13.300h4" />
            </svg>
          </MarkButton>
        </div>
        <div className="mt-[6px] flex gap-[7px]">
          <MarkButton label="Detail" width="w-[54px]">
            <DetailIcon size={18} />
          </MarkButton>
          <MarkButton label="Tooltip" width="w-[56px]">
            <svg width="20" height="18" viewBox="0 0 20 18" fill="none" stroke="#444" strokeWidth="1.400">
              <path d="M1.500 1.500h17v11H9.500l-4 4v-4h-4z" />
            </svg>
          </MarkButton>
        </div>
        <div className="mt-[16px] flex flex-col gap-[3px] pl-[11px]">
          {PILLS.map(([label, icon, bg]) => (
            <div key={label} className="flex h-[24px] items-center">
              <span className="flex w-[20px] shrink-0">
                {icon === "dots" && <ColorDots size={14} soft />}
                {icon === "size" && <SizeIcon size={14} />}
                {icon === "detail" && <DetailIcon size={14} />}
              </span>
              <div className={"flex h-full w-[142px] items-center whitespace-nowrap rounded-full pl-[13px] pt-[2px] text-[15px] font-medium tracking-[0.45px] text-white " + bg}>{label}</div>
            </div>
          ))}
        </div>
      </div>
      <div className="mt-[6px] h-[311px] w-[194px] border border-[#d4d4d4] bg-white">
        <div className="flex h-[34px] items-center whitespace-nowrap bg-[#fafafa] pl-[7px] pt-[4px] text-[15px] font-[350] tracking-[0.55px] text-[#333]">Department Type, Depa...</div>
        <div className="font-['Noto_Sans',sans-serif]">
          {LEGEND.map(([label, bg]) => (
            <div key={label} className="flex h-[21px] items-center pl-[4px]">
              <div className={"h-[13px] w-[13px] shrink-0 border border-black " + bg} />
              <span className="ml-[5px] whitespace-nowrap text-[14.5px] leading-[20px] tracking-[0.42px] text-[#5f5f5f]">{label}</span>
            </div>
          ))}
        </div>
      </div>
    </section>
  );
}

function Shelf({ label, children }) {
  return (
    <div className="flex h-[32px] w-[1234px] border border-[#d4d4d4] bg-[#fafafa] text-[15px] font-[350] tracking-[0.4px] text-[#333]">
      <div className="flex w-[159px] items-center border-r border-[#d4d4d4] pl-[7px]">
        {children}
        <span className="ml-[7px] pt-[2px]">{label}</span>
      </div>
    </div>
  );
}

export default function App() {
  return (
    <div className="relative flex h-[967px] w-[1702px] overflow-hidden bg-[#f4f4f4] font-['Roboto',sans-serif]">
      <DataPane />
      <Cards />
      <main className="flex flex-1 flex-col pt-px">
        <Shelf label="Columns">
          <svg width="13" height="12" viewBox="0 0 13 12" fill="#555" shapeRendering="crispEdges">
            <path d="M1 0h2v2H1zM5 0h2v2H5zM9 0h2v2H9zM1 3h2v8H1zM5 3h2v8H5zM9 3h2v8H9z" />
          </svg>
        </Shelf>
        <div className="h-[6px]" />
        <Shelf label="Rows">
          <svg width="13" height="12" viewBox="0 0 13 12" fill="#555" shapeRendering="crispEdges">
            <path d="M0 1h2v2H0zM0 5h2v2H0zM0 9h2v2H0zM4 1h9v2H4zM4 5h9v2H4zM4 9h9v2H4z" />
          </svg>
        </Shelf>
        <div className="mt-[6px] h-[889px] w-[1234px] border border-[#d4d4d4] bg-white">
          <h1 className="h-[63px] pl-[11px] pt-[11px] font-['Noto_Sans',sans-serif] text-[24.5px] font-light leading-[36px] tracking-[0.75px] text-[#444]">Days in the Hospital</h1>
          <div className="pl-[18px]">
            <Treemap />
          </div>
        </div>
      </main>
      <div className="absolute left-[260px] top-[193px] h-[356px] w-[206px] border-[5px] border-[#ea1b1d]" />
      <div className="absolute left-[260px] top-[562px] h-[317px] w-[212px] border-[5px] border-[#ea1b1d]" />
    </div>
  );
}
